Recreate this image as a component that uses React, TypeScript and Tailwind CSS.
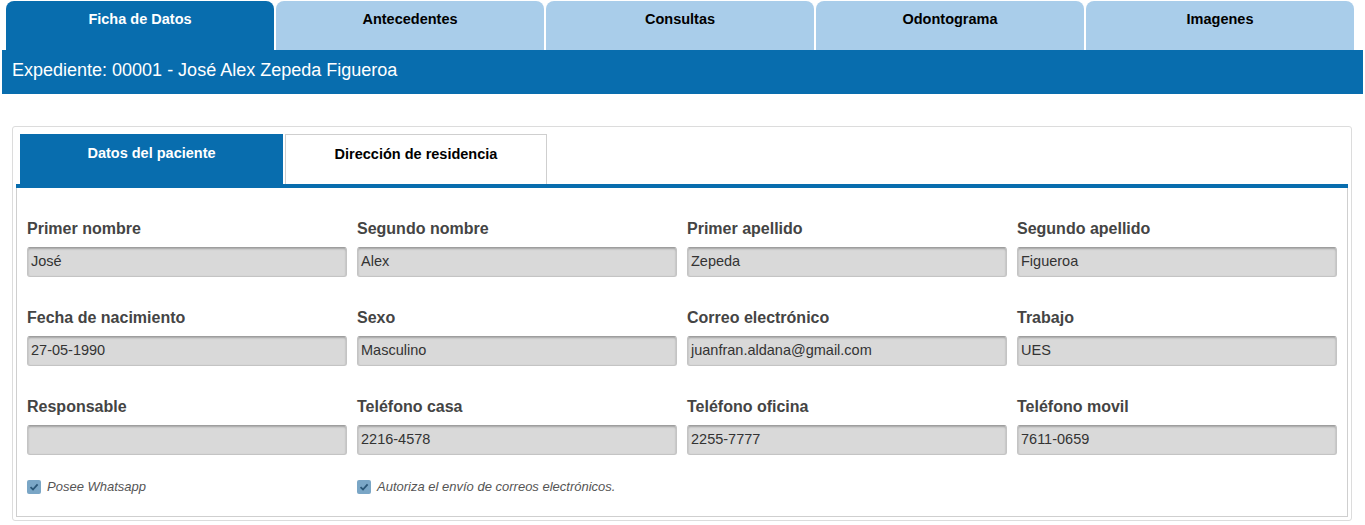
import React from "react";

const tabs = ["Ficha de Datos", "Antecedentes", "Consultas", "Odontograma", "Imagenes"];

const fields = [
    { label: "Primer nombre", value: "José" },
    { label: "Segundo nombre", value: "Alex" },
    { label: "Primer apellido", value: "Zepeda" },
    { label: "Segundo apellido", value: "Figueroa" },
    { label: "Fecha de nacimiento", value: "27-05-1990" },
    { label: "Sexo", value: "Masculino" },
    { label: "Correo electrónico", value: "juanfran.aldana@gmail.com" },
    { label: "Trabajo", value: "UES" },
    { label: "Responsable", value: "" },
    { label: "Teléfono casa", value: "2216-4578" },
    { label: "Teléfono oficina", value: "2255-7777" },
    { label: "Teléfono movil", value: "7611-0659" },
];

function Check({ label }: { label: string }) {
    return (
        <label className="flex items-center gap-[6px]">
            <span className="flex h-[14px] w-[14px] items-center justify-center rounded-[2px] bg-[#7aa6c6]">
                <svg width="10" height="10" viewBox="0 0 10 10">
                    <path d="M1.5 5.2 L4 7.5 L8.6 2.4" fill="none" stroke="#2a5677" strokeWidth="1.8" />
                </svg>
            </span>
            <span className="text-[13px] italic text-[#555]">{label}</span>
        </label>
    );
}

export default function App() {
    return (
        <div className="min-h-[525px] bg-white px-[2px] pt-[1px] font-['Liberation_Sans',Arial,sans-serif]">
            {/* pestañas principales */}
            <div className="ml-[4px] flex gap-[2px]">
                {tabs.map((t, i) => (
                    <div
                        key={t}
                        className={
                            i === 0
                                ? "h-[49px] w-[268px] rounded-t-[8px] bg-[#086dae] pt-[8px] text-center text-[14.5px] font-bold text-white"
                                : "h-[49px] w-[268px] rounded-t-[8px] bg-[#a9cdea] pt-[8px] text-center text-[14.5px] font-bold text-black"
                        }
                    >
                        {t}
                    </div>
                ))}
            </div>
            <div className="flex h-[44px] items-center bg-[#086dae] px-[10px] pb-[4px] text-[18px] text-white">
                Expediente: 00001 - José Alex Zepeda Figueroa
            </div>

            <div className="ml-[10px] mr-[11px] mt-[32px] rounded-[3px] border border-[#dcdcdc] p-[3px]">
                <div className="ml-[4px] mt-[4px] flex gap-[2px]">
                    <div className="h-[50px] w-[263px] bg-[#086dae] pt-[9px] text-center text-[14.5px] font-bold text-white">
                        Datos del paciente
                    </div>
                    <div className="h-[50px] w-[262px] border border-b-0 border-[#cfcfcf] pt-[9px] text-center text-[14.5px] font-bold text-black">
                        Dirección de residencia
                    </div>
                </div>
                <div className="border-t-[4px] border-[#086dae]">
                    <div className="border-x border-b border-[#cfcfcf] px-[10px] pb-[19px] pt-[30px]">
                        <div className="grid grid-cols-4 gap-x-[10px] gap-y-[30px]">
                            {fields.map((f) => (
                                <div key={f.label}>
                                    <div className="mb-[9px] h-[20px] text-[16px] font-bold leading-[22px] text-[#444]">
                                        {f.label}
                                    </div>
                                    <div className="flex h-[30px] items-center rounded-[3px] border border-[#c4c4c4] border-t-[#9e9e9e] bg-[#d9d9d9] px-[3px] text-[14.5px] text-[#333] shadow-[inset_0_1px_2px_rgba(0,0,0,0.25)]">
                                        {f.value}
                                    </div>
                                </div>
                            ))}
                        </div>
                        <div className="mt-[22px] grid grid-cols-4 gap-x-[10px]">
                            <Check label="Posee Whatsapp" />
                            <Check label="Autoriza el envío de correos electrónicos." />
                        </div>
                    </div>
                </div>
            </div>
        </div>
    );
}
